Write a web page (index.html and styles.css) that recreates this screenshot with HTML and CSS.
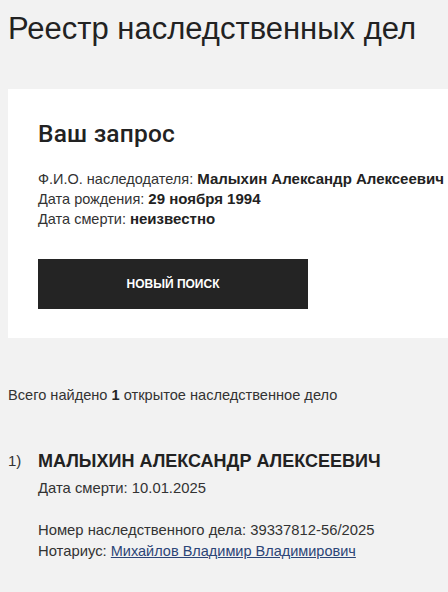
FILE: index.html
```html
<!DOCTYPE html>
<html lang="ru">
<head>
<meta charset="utf-8">
<link rel="stylesheet" href="styles.css">
</head>
<body>
<main class="page">
  <h1 class="title">Реестр наследственных дел</h1>
  <section class="card">
    <h2 class="card-title">Ваш запрос</h2>
    <div class="info">
      <div class="info-row">Ф.И.О. наследодателя: <b>Малыхин Александр Алексеевич</b></div>
      <div class="info-row">Дата рождения: <b>29 ноября 1994</b></div>
      <div class="info-row">Дата смерти: <b>неизвестно</b></div>
    </div>
    <button class="btn">НОВЫЙ ПОИСК</button>
  </section>
  <p class="summary">Всего найдено <b>1</b> открытое наследственное дело</p>
  <ol class="results">
    <li class="result">
      <span class="num">1)</span>
      <div class="result-body">
        <div class="result-name">МАЛЫХИН АЛЕКСАНДР АЛЕКСЕЕВИЧ</div>
        <div class="result-line">Дата смерти: 10.01.2025</div>
        <div class="result-meta">
          <div class="result-line">Номер наследственного дела: 39337812-56/2025</div>
          <div class="result-line">Нотариус: <a class="link" href="#">Михайлов Владимир Владимирович</a></div>
        </div>
      </div>
    </li>
  </ol>
</main>
</body>
</html>
```

FILE: styles.css
```css
html, body {
  margin: 0;
  padding: 0;
  background: #f2f2f2;
}
body {
  font-family: "Liberation Sans", Arial, sans-serif;
  color: #222;
  overflow: hidden;
}
.page {
  padding: 0 0 0 8px;
}
.title {
  margin: 0;
  padding-top: 11px;
  font-size: 31px;
  font-weight: 400;
  line-height: 36px;
  color: #222;
}
.card {
  margin-top: 42px;
  background: #fff;
  width: 460px;
  padding: 30px 30px 29px 30px;
  box-sizing: border-box;
}
.card-title {
  margin: 0;
  font-family: Roboto, "Liberation Sans", sans-serif;
  font-size: 24.5px;
  font-weight: 500;
  letter-spacing: 0.2px;
  line-height: 30px;
}
.info {
  margin-top: 20px;
  font-size: 14.5px;
  line-height: 20px;
  color: #333;
  white-space: nowrap;
}
.info b {
  color: #222;
  font-size: 15px;
}
.btn {
  display: block;
  margin-top: 30px;
  width: 270px;
  height: 50px;
  border: 0;
  background: #242424;
  color: #fff;
  font-family: "Liberation Sans", Arial, sans-serif;
  font-weight: 700;
  font-size: 12px;
}
.summary {
  margin: 47px 0 0;
  font-size: 14.6px;
  line-height: 20px;
  color: #333;
}
.summary b { color: #222; }
.results {
  list-style: none;
  margin: 44px 0 0;
  padding: 0;
}
.result {
  display: flex;
  align-items: flex-start;
}
.num {
  width: 30px;
  font-size: 15px;
  line-height: 24px;
  color: #333;
}
.result-name {
  font-size: 18px;
  font-weight: 700;
  line-height: 24px;
  color: #222;
}
.result-line {
  font-size: 14.8px;
  line-height: 21px;
  color: #333;
}
.result-body > .result-line {
  margin-top: 5px;
}
.result-meta {
  margin-top: 21px;
}
.link {
  color: #2c4577;
  text-decoration: underline;
  font-size: 14.5px;
}
```
